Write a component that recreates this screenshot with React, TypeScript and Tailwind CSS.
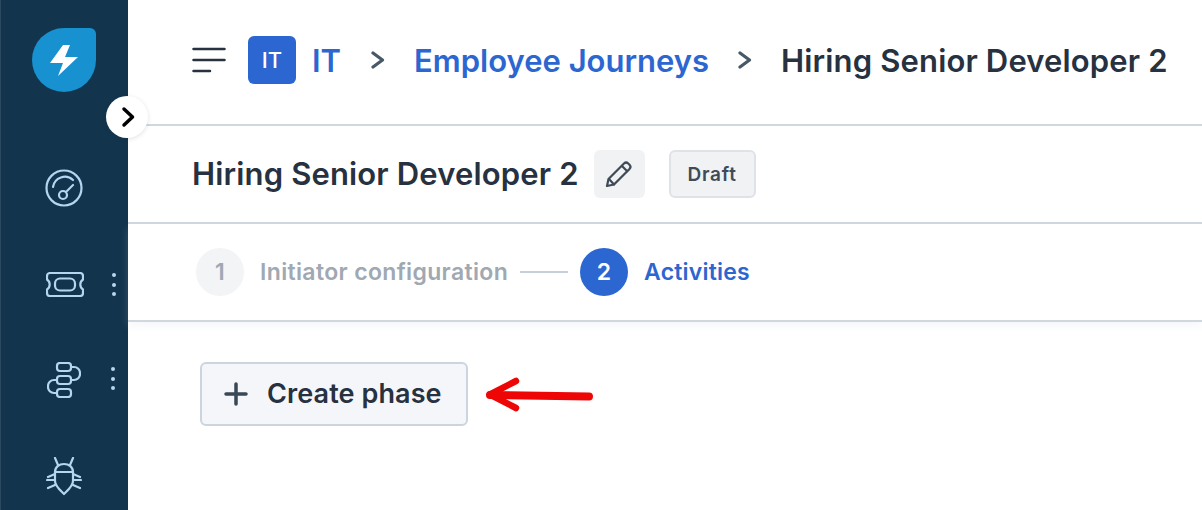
import React from "react";

const Dots = () => (
  <div className="flex flex-col gap-[5.500px]">
    <span className="w-1 h-1 rounded-full bg-[#b9d6ee]" />
    <span className="w-1 h-1 rounded-full bg-[#b9d6ee]" />
    <span className="w-1 h-1 rounded-full bg-[#b9d6ee]" />
  </div>
);

const stroke = { fill: "none", stroke: "#b5d5f0", strokeWidth: 2.2, strokeLinecap: "round" as const, strokeLinejoin: "round" as const };

const Chevron = ({ className }: { className: string }) => (
  <svg width="14" height="20" viewBox="0 0 14 20" fill="none" stroke="#475867" strokeWidth="3.2" strokeLinecap="round" strokeLinejoin="round" className={className}>
    <path d="M2 3l9.500 7-9.500 7" />
  </svg>
);

export default function App() {
  return (
    <div className="flex w-[1202px] h-[510px] overflow-hidden bg-white relative font-['Inter',sans-serif] text-[#27313f]">
      <aside className="w-[128px] shrink-0 bg-[#12344d] border-l border-[#2a4a62] flex flex-col items-center pt-[28px]">
        <svg width="64" height="64" viewBox="0 0 64 64" className="ml-[-1px] shrink-0">
          <path d="M32 0H58a6 6 0 0 1 6 6V32A32 32 0 1 1 32 0Z" fill="#1791d0" />
          <path d="M31 17L18 35h13l-5 13L46 29H33l5-12Z" fill="#fff" />
        </svg>
        <svg width="38" height="38" viewBox="0 0 38 38" className="mt-[77px] ml-[-1px] shrink-0" {...stroke}>
          <circle cx="19" cy="19" r="17.500" />
          <path d="M8 18a12 12 0 0 1 20-7" />
          <circle cx="18" cy="26" r="4" />
          <path d="M21 23l7-7" />
        </svg>
        <div className="relative mt-[65px] w-[38px] h-[25px] ml-[1px] shrink-0">
          <svg width="38" height="25" viewBox="0 0 38 25" {...stroke}>
            <path d="M4 1H34a3 3 0 0 1 3 3v3.500a6 6 0 0 0 0 10V21a3 3 0 0 1-3 3H4a3 3 0 0 1-3-3v-3.500a6 6 0 0 0 0-10V4a3 3 0 0 1 3-3Z" />
            <rect x="9" y="6.500" width="20" height="12" rx="5" />
          </svg>
          <div className="absolute left-[66px] top-[1px]"><Dots /></div>
        </div>
        <div className="relative mt-[65px] w-[34px] h-[36px] ml-[-1px] shrink-0">
          <svg width="34" height="36" viewBox="0 0 34 36" {...stroke}>
            <rect x="10" y="1" width="14" height="8" rx="3" />
            <rect x="10" y="14" width="14" height="8" rx="3" />
            <rect x="10" y="27" width="14" height="8" rx="3" />
            <path d="M24 5h3a6 6 0 0 1 6 6v1a6 6 0 0 1-6 6h-3" />
            <path d="M10 18H7a6 6 0 0 0-6 6v1a6 6 0 0 0 6 6h3" />
          </svg>
          <div className="absolute left-[64px] top-[5px]"><Dots /></div>
        </div>
        <svg width="36" height="39" viewBox="0 0 36 39" className="mt-[59px] ml-[-1px] shrink-0" {...stroke}>
          <path d="M9 15c0-5 4-8 9-8s9 3 9 8v9c0 5-5 9-9 13-4-4-9-8-9-13Z" />
          <path d="M9 15H27M9 1l3 7M27 1l-3 7" />
          <path d="M9 17L2 20M9 23H1M9 28L2 31M27 17l7 3M27 23h8M27 28l7 3" />
        </svg>
      </aside>

      <button className="absolute left-[106px] top-[96px] w-[42px] h-[42px] rounded-full bg-white flex items-center justify-center shadow-[0_1px_4px_rgba(18,52,77,0.15)]">
        <svg width="14" height="22" viewBox="0 0 14 22" fill="none" stroke="#000" strokeWidth="3.500" strokeLinecap="round" strokeLinejoin="round" className="ml-[1px]">
          <path d="M3 3l8.500 8-8.500 8" />
        </svg>
      </button>

      <main className="flex-1 flex flex-col min-w-0">
        <header className="h-[126px] shrink-0 border-b-2 border-[#cfd7df] flex items-center pl-[64px] whitespace-nowrap text-[31px] font-semibold pb-[4px]">
          <svg width="34" height="26" viewBox="0 0 34 26" fill="none" stroke="#27313f" strokeWidth="2.500" strokeLinecap="round" className="mr-[22px]">
            <path d="M1.500 2H32.500M1.500 13H32.500M1.500 24H18" />
          </svg>
          <span className="w-[48px] h-[48px] rounded-[6px] bg-[#2c66d1] text-white text-[22px] font-medium flex items-center justify-center">IT</span>
          <a className="ml-[16px] pt-[2px] text-[#2c66d1]">IT</a>
          <Chevron className="ml-[30px]" />
          <a className="ml-[29px] pt-[2px] text-[#2c66d1]">Employee Journeys</a>
          <Chevron className="ml-[29px]" />
          <span className="ml-[29px] pt-[2px] tracking-[0.15px]">Hiring Senior Developer 2</span>
        </header>

        <section className="h-[98px] shrink-0 border-b-2 border-[#cfd7df] flex items-center pl-[64px] whitespace-nowrap">
          <h1 className="text-[31px] font-semibold leading-none tracking-[0.15px] pb-[2px]">Hiring Senior Developer 2</h1>
          <button className="ml-[15px] w-[51px] h-[48px] rounded-[6px] bg-[#f0f2f4] flex items-center justify-center">
            <svg width="30" height="30" viewBox="0 0 30 30" fill="none" stroke="#3f4b58" strokeWidth="2.200" strokeLinejoin="round" strokeLinecap="round">
              <path d="M3 27l1.500-7L20 4.500a3 3 0 0 1 4.200 0l1.300 1.300a3 3 0 0 1 0 4.200L10 25.500 3 27Z" />
              <path d="M5 20l5 5.500M18 7l5 5" />
            </svg>
          </button>
          <span className="ml-[24px] w-[87px] h-[48px] pt-[2px] rounded-[6px] bg-[#f0f2f4] border-2 border-[#dfe3e8] flex items-center justify-center text-[19px] font-semibold tracking-[0.8px] text-[#3f4b58]">Draft</span>
        </section>

        <nav className="h-[98px] shrink-0 border-b-2 border-[#cfd7df] flex items-center pl-[68px] whitespace-nowrap shadow-[0_4px_8px_rgba(207,215,223,0.2)] text-[23px] font-semibold tracking-[0.35px]">
          <span className="w-[48px] h-[48px] rounded-full bg-[#f3f4f6] text-[#a0a8b2] flex items-center justify-center">1</span>
          <span className="ml-[16px] text-[#a0a8b2]">Initiator configuration</span>
          <span className="ml-[12px] w-[48px] h-[2px] bg-[#c6d0da]" />
          <span className="ml-[12px] w-[48px] h-[48px] rounded-full bg-[#2c66d1] text-white flex items-center justify-center">2</span>
          <span className="ml-[16px] text-[#2c66d1] tracking-[0.2px]">Activities</span>
        </nav>

        <div className="flex items-center pl-[72px] pt-[40px]">
          <button className="w-[268px] h-[64px] rounded-[6px] border-2 border-[#cbd5df] bg-[#f4f6f9] flex items-center pl-[22px] text-[27px] font-semibold tracking-[0.1px] text-[#27313f] whitespace-nowrap">
            <svg width="24" height="24" viewBox="0 0 24 24" fill="none" stroke="#3a4754" strokeWidth="3.500" strokeLinecap="round">
              <path d="M12 2V22M2 12H22" />
            </svg>
            <span className="ml-[19px]">Create phase</span>
          </button>
          <svg width="110" height="38" viewBox="0 0 110 38" fill="none" stroke="#ee0606" strokeLinecap="round" strokeLinejoin="round" className="ml-[17px] mt-[1px]">
            <path d="M5 19L104 20.500" strokeWidth="8" />
            <path d="M31 5L5 18.500L31 32" strokeWidth="6.500" />
          </svg>
        </div>
      </main>
    </div>
  );
}
